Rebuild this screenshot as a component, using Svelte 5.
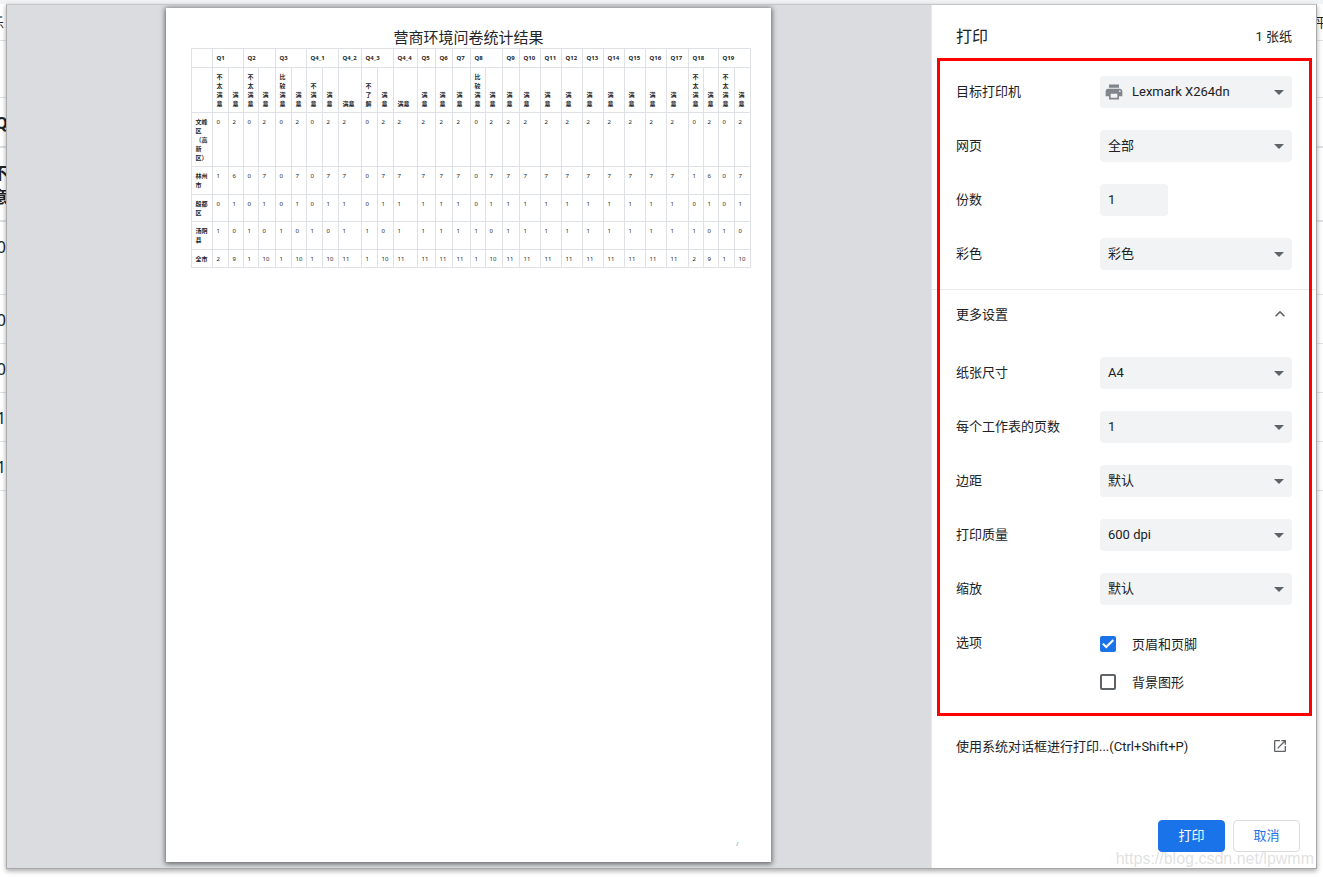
<script lang="ts">
  type Field = { id: string; label: string; value: string; kind?: 'printer' | 'number' };

  const basicFields: Field[] = [
    { id: 'printer', label: '目标打印机', value: 'Lexmark X264dn', kind: 'printer' },
    { id: 'pages', label: '网页', value: '全部' },
    { id: 'copies', label: '份数', value: '1', kind: 'number' },
    { id: 'color', label: '彩色', value: '彩色' }
  ];

  const moreFields: Field[] = [
    { id: 'paper', label: '纸张尺寸', value: 'A4' },
    { id: 'per-sheet', label: '每个工作表的页数', value: '1' },
    { id: 'margins', label: '边距', value: '默认' },
    { id: 'quality', label: '打印质量', value: '600 dpi' },
    { id: 'scale', label: '缩放', value: '默认' }
  ];

  let showMore = $state(true);
  let headerFooter = $state(true);
  let background = $state(false);

  // Relative column widths of the printed table, row header first
  const colWidths = [
    21, 16, 15, 15, 17, 16, 15, 16, 16, 23, 16, 16, 24, 18, 17, 18,
    15, 17, 17, 21, 21, 21, 21, 21, 21, 21, 22, 15, 15, 16, 16
  ];
  const totalWidth = colWidths.reduce((a, b) => a + b, 0);

  const questions: [string, number][] = [
    ['Q1', 2], ['Q2', 2], ['Q3', 2], ['Q4_1', 2], ['Q4_2', 1], ['Q4_3', 2], ['Q4_4', 1],
    ['Q5', 1], ['Q6', 1], ['Q7', 1], ['Q8', 2], ['Q9', 1], ['Q10', 1], ['Q11', 1],
    ['Q12', 1], ['Q13', 1], ['Q14', 1], ['Q15', 1], ['Q16', 1], ['Q17', 1],
    ['Q18', 2], ['Q19', 2]
  ];

  const ok = '满\n意';
  const notVery = '不\n太\n满\n意';
  const fairly = '比\n较\n满\n意';
  const answers = [
    notVery, ok, notVery, ok, fairly, ok, '不\n满\n意', ok, '满意', '不\n了\n解', ok, '满意',
    ok, ok, ok, fairly, ok, ok, ok, ok, ok, ok, ok, ok, ok, ok, notVery, ok, notVery, ok
  ];

  const results = [
    { area: '文峰\n区\n（高\n新\n区）', values: '0 2 0 2 0 2 0 2 2 0 2 2 2 2 2 0 2 2 2 2 2 2 2 2 2 2 0 2 0 2' },
    { area: '林州\n市', values: '1 6 0 7 0 7 0 7 7 0 7 7 7 7 7 0 7 7 7 7 7 7 7 7 7 7 1 6 0 7' },
    { area: '殷都\n区', values: '0 1 0 1 0 1 0 1 1 0 1 1 1 1 1 0 1 1 1 1 1 1 1 1 1 1 0 1 0 1' },
    { area: '汤阴\n县', values: '1 0 1 0 1 0 1 0 1 1 0 1 1 1 1 1 0 1 1 1 1 1 1 1 1 1 1 0 1 0' },
    { area: '全市', values: '2 9 1 10 1 10 1 10 11 1 10 11 11 11 11 1 10 11 11 11 11 11 11 11 11 11 2 9 1 10' }
  ];

  // Page behind the dialog, only its edges stay visible
  const behind = [
    { cls: 'nav', left: '音乐', right: '平台' },
    { cls: 'gap', left: '', right: '' },
    { cls: 'head', left: 'Q', right: '' },
    { cls: 'sub', left: '不\n意', right: '' },
    { cls: 'tall', left: '0', right: '' },
    { cls: '', left: '0', right: '' },
    { cls: '', left: '0', right: '' },
    { cls: '', left: '1', right: '' },
    { cls: '', left: '1', right: '' }
  ];
</script>

{#snippet fieldRow(field: Field)}
  <div class="row">
    <label for={field.id}>{field.label}</label>
    {#if field.kind === 'number'}
      <input id={field.id} class="control number" type="text" inputmode="numeric" value={field.value} />
    {:else}
      <div class="select-wrap">
        <select id={field.id} class="control" class:with-icon={field.kind === 'printer'}>
          <option>{field.value}</option>
        </select>
        {#if field.kind === 'printer'}
          <svg class="printer" viewBox="0 0 24 24" aria-hidden="true">
            <path d="M19 8H5c-1.66 0-3 1.34-3 3v6h4v4h12v-4h4v-6c0-1.66-1.34-3-3-3zm-3 11H8v-5h8v5zm3-7c-.55 0-1-.45-1-1s.45-1 1-1 1 .45 1 1-.45 1-1 1zm-1-9H6v4h12V3z" />
          </svg>
        {/if}
        <svg class="arrow" viewBox="0 0 10 5" aria-hidden="true"><path d="M0 0h10L5 5z" /></svg>
      </div>
    {/if}
  </div>
{/snippet}

<div class="screen">
  <div class="behind" aria-hidden="true">
    {#each behind as line}
      <div class="line {line.cls}">
        <span class="edge">{line.left}</span>
        <span class="edge end">{line.right}</span>
      </div>
    {/each}
  </div>

  <main class="dialog">
    <section class="preview">
      <article class="paper">
        <h1>营商环境问卷统计结果</h1>
        <table>
          <colgroup>
            {#each colWidths as w}
              <col style="width: {(w / totalWidth) * 100}%" />
            {/each}
          </colgroup>
          <thead>
            <tr class="questions">
              <th></th>
              {#each questions as [name, span]}
                <th colspan={span}>{name}</th>
              {/each}
            </tr>
            <tr>
              <th></th>
              {#each answers as answer}
                <th>{answer}</th>
              {/each}
            </tr>
          </thead>
          <tbody>
            {#each results as row}
              <tr>
                <th scope="row">{row.area}</th>
                {#each row.values.split(' ') as value}
                  <td>{value}</td>
                {/each}
              </tr>
            {/each}
          </tbody>
        </table>
        <footer class="paper-foot">/</footer>
      </article>
    </section>

    <aside class="sidebar">
      <header>
        <h2>打印</h2>
        <span>1 张纸</span>
      </header>

      <div class="settings">
        <div class="basic">
          {#each basicFields as field (field.id)}
            {@render fieldRow(field)}
          {/each}
        </div>

        <button class="more-toggle" aria-expanded={showMore} onclick={() => (showMore = !showMore)}>
          <span>更多设置</span>
          <svg class:closed={!showMore} viewBox="0 0 24 24" aria-hidden="true">
            <path d="M12 8l-6 6 1.41 1.41L12 10.83l4.59 4.58L18 14z" />
          </svg>
        </button>

        {#if showMore}
          <div class="more">
            {#each moreFields as field (field.id)}
              {@render fieldRow(field)}
            {/each}
            <div class="row options" role="group" aria-labelledby="options-label">
              <span id="options-label">选项</span>
              <div class="checks">
                <label class="check">
                  <input type="checkbox" bind:checked={headerFooter} />
                  <span>页眉和页脚</span>
                </label>
                <label class="check">
                  <input type="checkbox" bind:checked={background} />
                  <span>背景图形</span>
                </label>
              </div>
            </div>
          </div>
        {/if}
      </div>

      <button class="system">
        <span>使用系统对话框进行打印...(Ctrl+Shift+P)</span>
        <svg viewBox="0 0 24 24" aria-hidden="true">
          <path d="M19 19H5V5h7V3H5c-1.11 0-2 .9-2 2v14c0 1.1.89 2 2 2h14c1.1 0 2-.9 2-2v-7h-2v7zM14 3v2h3.59l-9.83 9.83 1.41 1.41L19 6.41V10h2V3h-7z" />
        </svg>
      </button>

      <div class="actions">
        <button class="primary">打印</button>
        <button>取消</button>
      </div>
    </aside>
    <div class="watermark">https://blog.csdn.net/lpwmm</div>
  </main>
</div>

<style>
  :global(body) {
    background: #fff;
  }

  .screen {
    display: grid;
    grid-template-columns: minmax(0, 1fr);
    min-height: 100vh;
    box-sizing: border-box;
    border-top: 4px solid #f1f3f4;
    color: #202124;
    font-family: Roboto, 'Noto Sans CJK SC', sans-serif;
    font-size: 13px;
  }

  .behind,
  .dialog {
    grid-area: 1 / 1;
  }

  .behind {
    overflow: hidden;
    font-family: 'Noto Sans', 'Noto Sans CJK SC', sans-serif;
    font-size: 16px;
    line-height: 24px;
    color: #212529;
  }

  .line {
    display: flex;
    justify-content: space-between;
    box-sizing: border-box;
    height: 49px;
    padding-top: 13px;
    border-bottom: 1px solid #dee2e6;
  }

  .line.nav {
    height: 37px;
    padding-top: 8px;
    font-size: 13px;
    line-height: 20px;
  }

  .line.gap {
    height: 57px;
  }

  .line.head,
  .line.sub {
    border-bottom-width: 2px;
    font-weight: bold;
  }

  .line.head {
    height: 50px;
  }

  .line.sub {
    height: 74px;
  }

  .line.tall {
    height: 73px;
  }

  .edge {
    display: flex;
    justify-content: flex-end;
    width: 6px;
    white-space: pre;
  }

  .nav .edge {
    width: 4px;
  }

  .head .edge,
  .sub .edge {
    width: 8px;
  }

  .line .edge.end {
    justify-content: flex-start;
    width: 8px;
  }

  .dialog {
    position: relative;
    display: flex;
    box-sizing: border-box;
    height: calc(100vh - 12px);
    margin: 0 6px 8px;
    border: 1px solid #aaa;
    border-top-color: #c4c6c8;
    background: #fff;
    box-shadow: 0 2px 5px rgba(0, 0, 0, 0.35);
  }

  .preview {
    flex: 1;
    display: flex;
    justify-content: center;
    min-width: 0;
    box-sizing: border-box;
    padding: 3px 2px 6px 0;
    overflow: hidden;
    background: #dadce0;
  }

  .paper {
    display: flex;
    flex-direction: column;
    box-sizing: border-box;
    height: 100%;
    aspect-ratio: 605 / 854;
    padding: 18px 20px 12px 25px;
    background: #fff;
    box-shadow: 0 1px 5px 1px rgba(0, 0, 0, 0.55);
    color: #212529;
    font-family: 'Noto Sans', 'Noto Sans CJK SC', sans-serif;
  }

  h1 {
    margin: 0;
    padding-right: 4px;
    font-size: 15px;
    font-weight: 400;
    line-height: 22px;
    text-align: center;
  }

  table {
    width: 100%;
    table-layout: fixed;
    border-collapse: collapse;
    font-size: 6px;
    line-height: 9px;
  }

  th,
  td {
    height: 9px;
    padding: 5px 0 3px 4px;
    border: 1px solid #dee2e6;
    text-align: left;
    vertical-align: top;
    white-space: pre;
  }

  thead th {
    vertical-align: bottom;
  }

  .questions th {
    padding-bottom: 4px;
  }

  tbody tr:nth-child(even) {
    height: 28px;
  }

  .paper-foot {
    margin-top: auto;
    padding-right: 12px;
    color: #1f8f8f;
    font-size: 6px;
    line-height: 12px;
    text-align: right;
  }

  .sidebar {
    display: flex;
    flex-direction: column;
    flex: 0 0 385px;
    box-sizing: border-box;
    border-left: 1px solid #e8e8eb;
    background: #fff;
  }

  header {
    display: flex;
    justify-content: space-between;
    align-items: center;
    height: 60px;
    padding: 0 24px;
  }

  h2 {
    margin: 0;
    font-size: 16px;
    font-weight: 400;
  }

  .settings {
    position: relative;
    padding-bottom: 8px;
  }

  /* Red frame around the settings */
  .settings::after {
    content: '';
    position: absolute;
    inset: -7px 4px 0 5px;
    border: 3px solid #f00;
    pointer-events: none;
  }

  .basic {
    padding-bottom: 8px;
    border-bottom: 1px solid #e8eaed;
  }

  .more {
    padding-top: 8px;
  }

  .row {
    display: grid;
    grid-template-columns: 1fr 192px;
    align-items: center;
    height: 54px;
    padding: 0 24px;
  }

  .row > label {
    padding-bottom: 4px;
  }

  .select-wrap {
    position: relative;
  }

  .control {
    display: block;
    box-sizing: border-box;
    width: 100%;
    height: 32px;
    padding: 0 24px 1px 8px;
    border: 0;
    border-radius: 4px;
    appearance: none;
    background: #f1f3f4;
    color: #202124;
    font: inherit;
  }

  .control.with-icon {
    padding-left: 32px;
  }

  .control.number {
    width: 68px;
    padding: 0 8px 2px;
  }

  .printer,
  .arrow {
    position: absolute;
    pointer-events: none;
  }

  .printer {
    top: 6px;
    left: 4px;
    width: 20px;
    height: 20px;
    fill: #80868b;
  }

  .arrow {
    top: 14px;
    right: 8px;
    width: 10px;
    height: 5px;
    fill: #5f6368;
  }

  button {
    font: inherit;
    cursor: pointer;
  }

  .more-toggle,
  .system {
    display: flex;
    justify-content: space-between;
    align-items: center;
    width: 100%;
    padding: 0 24px;
    border: 0;
    background: none;
    color: #202124;
    text-align: left;
  }

  .more-toggle span,
  .system span {
    padding-bottom: 2px;
  }

  .more-toggle {
    height: 48px;
  }

  .more-toggle svg {
    width: 20px;
    height: 20px;
    margin-right: 2px;
    fill: #5f6368;
  }

  .more-toggle svg.closed {
    transform: rotate(180deg);
  }

  .system {
    height: 60px;
  }

  .system svg {
    width: 16px;
    height: 16px;
    margin-right: 4px;
    fill: #5f6368;
  }

  .row.options {
    align-items: start;
    height: 92px;
    box-sizing: border-box;
    line-height: 20px;
    padding-top: 17px;
  }

  .checks {
    display: flex;
    flex-direction: column;
    gap: 16px;
  }

  .check {
    display: flex;
    align-items: center;
    gap: 16px;
  }

  .check span {
    padding-top: 2px;
  }

  .check input {
    box-sizing: border-box;
    width: 16px;
    height: 16px;
    margin: 0;
    border: 2px solid #5f6368;
    border-radius: 2px;
    appearance: none;
  }

  .check input:checked {
    border-color: #1a73e8;
    background: #1a73e8;
  }

  .check input:checked::after {
    content: '';
    display: block;
    width: 16px;
    height: 16px;
    margin: -2px;
    background: #fff;
    clip-path: polygon(13% 52%, 22% 43%, 39% 60%, 79% 20%, 88% 29%, 39% 78%);
  }

  .actions {
    display: flex;
    justify-content: flex-end;
    gap: 8px;
    margin-top: auto;
    padding: 16px;
  }

  .actions button {
    width: 67px;
    height: 32px;
    padding: 0 0 4px;
    border: 1px solid #dadce0;
    border-radius: 4px;
    background: #fff;
    color: #1a73e8;
  }

  .actions .primary {
    border-color: #1a73e8;
    background: #1a73e8;
    color: #fff;
  }

  .watermark {
    position: absolute;
    right: 2px;
    bottom: 0;
    color: rgba(195, 195, 195, 0.5);
    font-family: 'Liberation Sans', Arial, sans-serif;
    font-size: 16px;
    line-height: 18px;
    pointer-events: none;
  }
</style>
